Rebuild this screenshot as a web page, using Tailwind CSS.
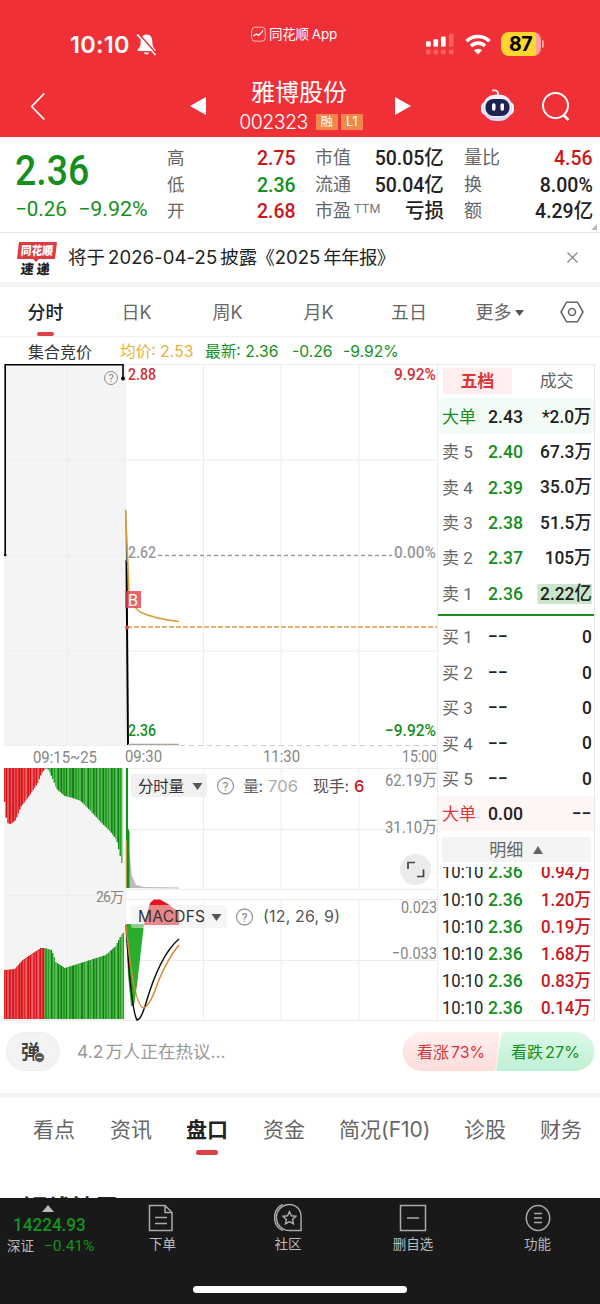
<!DOCTYPE html>
<html lang="zh-CN">
<head>
<meta charset="utf-8">
<title>雅博股份 002323</title>
<script src="https://cdn.jsdelivr.net/npm/@tailwindcss/browser@4"></script>
</head>
<body class="w-[600px] h-[1304px] overflow-hidden bg-white font-['Inter','Noto_Sans_CJK_SC',sans-serif] text-[#222]">
<div class="flex flex-col w-[600px] h-[1304px]">

<!-- status bar and title -->
<header class="h-[137px] shrink-0 bg-[#f03037] text-white flex flex-col">
  <div class="h-[70px] grid grid-cols-[238px_112px_1fr] shrink-0">
    <div class="flex items-center pl-[70px] pt-[19px]">
      <span class="text-[23.500px] font-semibold leading-none tracking-[0.3px]">10:10</span>
      <svg class="ml-[6px]" width="21" height="24" viewBox="0 0 21 24"><path d="M10.5 1.5c-4 0-5.8 3-5.8 6.500c0 5-1 6.300-3 8.500v1.500h17.600v-1.500c-2-2.200-3-3.500-3-8.500c0-3.500-1.800-6.500-5.800-6.500zM7.800 19.500a2.800 2.800 0 0 0 5.400 0z" fill="#fff"/><path d="M3 1l17.500 20" stroke="#f03037" stroke-width="1.600"/><path d="M1.200 1.500L19.500 22" stroke="#fff" stroke-width="1.700"/></svg>
    </div>
    <div class="flex items-start justify-center pt-[26px] gap-[3px]">
      <svg width="15" height="17" viewBox="0 0 15 17" fill="none"><rect x=".7" y="1.200" width="13.600" height="14" rx="3.500" stroke="#ffb9b5"/><path d="M2.500 10l3-2 2 1.500 4-4M11 4.500l1 1" stroke="#fff" stroke-width="1.300"/></svg>
      <span class="text-[13.500px] leading-[17px] whitespace-nowrap tracking-[-0.2px]">同花顺<span class="ml-[3px]">App</span></span>
    </div>
    <div class="flex items-center justify-end pt-[17px] pr-[56px] gap-[10px]">
      <svg width="29" height="22" viewBox="0 0 31 22" fill="#fff"><rect x="0" y="8" width="5" height="6" rx="1"/><rect x="8" y="6" width="5" height="8" rx="1"/><rect x="16" y="3" width="5" height="11" rx="1"/><g fill="#ff6265"><rect x="24.500" y="0" width="5" height="14" rx="1"/><rect x="0" y="17" width="5" height="5" rx="1.500"/><rect x="8" y="17" width="5" height="5" rx="1.500"/><rect x="16" y="17" width="5" height="5" rx="1.500"/><rect x="24.500" y="17" width="5" height="5" rx="1.500"/></g></svg>
      <svg width="26" height="22" viewBox="0 0 26 22" fill="none" stroke="#fff" stroke-width="3.600"><path d="M1.500 8.200a16.500 16.500 0 0 1 23 0"/><path d="M6 13a10 10 0 0 1 14 0"/><path d="M13 21.500l-4-4.200a5.800 5.800 0 0 1 8 0z" fill="#fff" stroke="none"/></svg>
      <div class="flex items-center">
        <div class="w-[40px] h-[24px] rounded-[8px] bg-linear-to-r from-[#ffd62e] from-88% to-[#ffa39c] to-88% text-black font-bold text-[19.500px] leading-[24px] pl-[8px] tracking-[-0.5px]">87</div>
        <div class="w-[2px] h-[8px] ml-[1px] rounded-r bg-[#ff9c9c]"></div>
      </div>
    </div>
  </div>
  <div class="h-[67px] grid grid-cols-[190px_218px_72px_120px] shrink-0">
    <div class="pl-[29px] pt-[22px]"><svg width="18" height="29" viewBox="0 0 18 32"><path d="M16 1.500L2 16l14 14.500" fill="none" stroke="#fff" stroke-width="1.800"/></svg></div>
    <div class="flex flex-col items-center">
      <div class="flex items-start justify-center w-full h-[40px]">
        <svg class="mt-[27px] shrink-0" width="16" height="18" viewBox="0 0 16 17" preserveAspectRatio="none"><path d="M0 8.500L16 0v17z" fill="#fff"/></svg>
        <div class="w-[188px] text-center text-[24px] leading-[26px] pt-[10px]">雅博股份</div>
        <svg class="mt-[27px] shrink-0 ml-[3px] -mr-[3px]" width="16" height="18" viewBox="0 0 16 17" preserveAspectRatio="none"><path d="M16 8.500L0 0v17z" fill="#fff"/></svg>
      </div>
      <div class="flex items-center h-[24px] gap-[3px] pl-[4px]">
        <span class="text-[19.500px] leading-[24px] font-light tracking-[-0.5px] mr-[5px]">002323</span>
        <span class="w-[22px] h-[16px] bg-[#f0874b] text-[12.500px] leading-[16px] text-center">融</span>
        <span class="w-[22px] h-[16px] bg-[#f0874b] text-[12.500px] leading-[16px] text-center">L1</span>
      </div>
    </div>
    <div></div>
    <div class="flex gap-[26px] pt-[20px]">
      <svg width="35" height="34" viewBox="0 0 35 36" preserveAspectRatio="none" class="mt-[-1px]"><path d="M12 1.500h4l2 2v4" fill="none" stroke="#ffe2e6" stroke-width="2"/><rect x="1" y="13" width="33" height="15" rx="6" fill="#fff"/><rect x="3" y="6" width="29" height="28" rx="13" fill="#dcd6fb"/><rect x="4" y="6" width="27" height="24" rx="11" fill="#f3effc"/><rect x="5.500" y="10.500" width="24" height="18" rx="8" fill="#1e2452"/><rect x="12" y="15" width="3.500" height="8" rx="1.700" fill="#fff"/><rect x="20.500" y="15" width="3.500" height="8" rx="1.700" fill="#fff"/></svg>
      <svg class="mt-[1px]" width="30" height="32" viewBox="0 0 30 32" fill="none" stroke="#fff" stroke-width="2"><circle cx="14.500" cy="14.500" r="12.500"/><path d="M22.500 24l5 5" stroke-width="2.500"/></svg>
    </div>
  </div>
</header>

<!-- quote summary -->
<section class="h-[96px] shrink-0 border-b border-[#e8e8e8] grid grid-cols-[167px_129px_148px_149px] font-['Roboto','Noto_Sans_CJK_SC',sans-serif]">
  <div class="pl-[15px] pt-[10px] text-[#158f1c]">
    <div class="text-[43px] leading-[46px] font-medium scale-x-[.87] origin-left whitespace-nowrap">2.36</div>
    <div class="flex text-[21px] leading-[26px] mt-[3px] whitespace-nowrap"><span class="w-[63px]"><span class="inline-block scale-x-[.98] origin-left">−0.26</span></span><span class="inline-block scale-x-[1.02] origin-left">−9.92%</span></div>
  </div>
  <div class="pt-[8px] text-[17.500px] leading-[26.500px] text-[#666]" id="q1"></div>
  <div class="pt-[8px] pl-[19px] text-[18px] leading-[26.500px] text-[#666]" id="q2"></div>
  <div class="pt-[8px] pl-[20px] text-[18px] leading-[26.500px] text-[#666] relative" id="q3"></div>
</section>

<!-- announcement -->
<section class="h-[54px] shrink-0 flex items-center border-b-5 border-[#f4f4f4]">
  <svg class="ml-[16px]" width="42" height="37" viewBox="0 0 42 37" font-family="'Noto Sans CJK SC',sans-serif" font-weight="900"><path d="M3 3l38 0-2 17-16 0-3 3-3-3-16 0z" fill="#dc3c40"/><text x="6" y="16.500" font-size="12" fill="#fff" textLength="32" lengthAdjust="spacingAndGlyphs" transform="skewX(-5)">同花顺</text><text x="8" y="35" font-size="13.500" fill="#222" textLength="29" lengthAdjust="spacingAndGlyphs" transform="skewX(-6)">速 递</text></svg>
  <div class="ml-[10px] w-[509px] -mt-[2px] text-[18.500px] leading-[30px] flex whitespace-nowrap">将于<span class="mx-[3px] tracking-[0.1px]">2026-04-25</span>披露<span class="-ml-[1px]">《</span><span>2025</span><span class="ml-[3px] tracking-[-0.7px]">年年报》</span></div>
  <svg class="-ml-[11px]" width="13" height="13" viewBox="0 0 13 13"><path d="M1.500 1.500l10 10m0-10l-10 10" stroke="#888" stroke-width="1.300"/></svg>
</section>

<!-- period tabs -->
<nav class="h-[50px] shrink-0 border-b border-[#f0f0f0] grid grid-cols-[91px_91px_91px_91px_90px_91px_55px] text-[18px] text-[#666] text-center leading-[52px]">
  <div class="flex flex-col items-center font-medium text-[#222]"><span class="h-[45px]">分时</span><span class="w-[17px] h-[4px] rounded-full bg-[#dc3f45]"></span></div>
  <div>日K</div><div>周K</div><div>月K</div><div>五日</div>
  <div class="flex items-center justify-center gap-[3px]">更多<svg width="9" height="6" viewBox="0 0 9 6"><path d="M0 0h9L4.500 6z" fill="#555"/></svg></div>
  <div class="flex items-center justify-center"><svg class="-mt-[3px] -ml-[2px]" width="24" height="22" viewBox="0 0 24 22" fill="none" stroke="#666" stroke-width="1.600"><path d="M6.500 1.200h11L23 11l-5.500 9.800h-11L1 11z"/><circle cx="12" cy="11" r="3.500"/></svg></div>
</nav>

<div class="h-[27px] shrink-0 flex items-center text-[15.700px] whitespace-nowrap text-[#158f1c] pt-[2px]">
  <span class="w-[120px] pl-[28px] text-[16px] text-[#333]">集合竞价</span>
  <span class="w-[85px] text-[#e6b13a]">均价: 2.53</span>
  <span class="w-[87px]">最新: 2.36</span>
  <span class="w-[51px]">-0.26</span><span>-9.92%</span>
</div>

<!-- charts and order book -->
<main class="h-[658px] shrink-0 flex">
  <svg id="chart" width="438" height="658" viewBox="0 364 438 658" class="shrink-0" font-family="Roboto,'Noto Sans CJK SC',sans-serif" font-size="17" fill="none">
    <path d="M4 364h121.500v382H4zM4 768h121.500v253H4z" fill="#f4f4f4"/>
    <g stroke="#ededed"><path d="M4 364.500H438M4 460H438M4 555.500H125M4 651H438M4 745.500H125M125.500 364v382M203.500 364v382M281 364v382M359 364v382M437.500 364v657M67 364v382M67 768v253"/><path d="M125 768.500H438M125 829.500H438M125 889.500H438M125 899.500H438M125 960.500H438M4 1020.500H438M4 895.500h121M203.500 768v121M281 768v121M359 768v121M203.500 899v122M281 899v122M359 899v122M125.500 768v253"/></g>
    <g id="bars"></g>
    <path d="M158 555.500H392" stroke="#9a9a9a" stroke-width="1.300" stroke-dasharray="4 3"/>
    <path d="M127 627H437" stroke="#e09b46" stroke-width="1.500" stroke-dasharray="5 2"/>
    <path d="M180 745.500H437" stroke="#ccc" stroke-dasharray="5 4"/>
    <path d="M5.200 555V364.800H123v14" stroke="#000" stroke-width="1.600"/><circle cx="123" cy="378.500" r="2" fill="#000"/><circle cx="5.200" cy="555" r="1.300" fill="#000"/>
    <g stroke="#8b8b8b"><circle cx="111" cy="378" r="6.500"/></g><text x="111" y="382" font-size="11" text-anchor="middle" fill="#888">?</text>
    <path d="M126.500 560L128 745" stroke="#000" stroke-width="2"/><path d="M125.800 510L126.500 562" stroke="#555" stroke-width="1"/>
    <path d="M128 744.500H179" stroke="#aaa59c" stroke-width="1.500"/>
    <path d="M125.500 510Q128 560 129 593Q132 606 140 612Q155 619 179 621.500" stroke="#d9a13c" stroke-width="1.500"/>
    <rect x="125" y="591" width="16" height="17" fill="#e0474c" fill-opacity=".82"/><text x="128" y="606" font-size="16" fill="#fff" textLength="10" lengthAdjust="spacingAndGlyphs">B</text><circle cx="127" cy="627.500" r="2" fill="#e0474c"/>
    <g font-weight="500">
      <text x="128" y="380" fill="#d42f33" textLength="28" lengthAdjust="spacingAndGlyphs">2.88</text>
      <text x="394" y="380" fill="#d42f33" textLength="42" lengthAdjust="spacingAndGlyphs">9.92%</text>
      <text x="128" y="558" fill="#999" textLength="28" lengthAdjust="spacingAndGlyphs">2.62</text>
      <text x="394" y="558" fill="#999" textLength="42" lengthAdjust="spacingAndGlyphs">0.00%</text>
      <text x="128" y="736" fill="#158f1c" textLength="28" lengthAdjust="spacingAndGlyphs">2.36</text>
      <text x="385" y="736" fill="#158f1c" textLength="51" lengthAdjust="spacingAndGlyphs">−9.92%</text>
    </g>
    <g fill="#858585">
      <text x="33" y="763" textLength="64" lengthAdjust="spacingAndGlyphs">09:15~25</text>
      <text x="125" y="762" textLength="37" lengthAdjust="spacingAndGlyphs">09:30</text>
      <text x="263" y="762" textLength="37" lengthAdjust="spacingAndGlyphs">11:30</text>
      <text x="402" y="762" textLength="35" lengthAdjust="spacingAndGlyphs">15:00</text>
      <text x="385" y="786" textLength="52" lengthAdjust="spacingAndGlyphs">62.19万</text>
      <text x="385" y="833" textLength="52" lengthAdjust="spacingAndGlyphs">31.10万</text>
      <text x="401" y="913" textLength="36" lengthAdjust="spacingAndGlyphs">0.023</text>
      <text x="392" y="959" textLength="45" lengthAdjust="spacingAndGlyphs">−0.033</text>
      <text x="96" y="902" font-size="14" textLength="28">26万</text>
    </g>
    <!-- minute volume -->
    <path d="M129 888V850L130.500 862L132 876L136 885L144 887L179 887.500V888.500z" fill="#bbb"/>
    <path d="M126 768h2v60l1.500 4v56h-3.500z" fill="#158f1c"/><path d="M126.300 840v48" stroke="#d9a13c"/>
    <!-- macd -->
    <path d="M144 925L150 903L154 899.500H160L168 904L173 908L179 912V925z" fill="#e2161c"/>
    <path d="M126 924H144L137 985L134 1006H131L128 975z" fill="#2aad2a"/>
    <rect x="131" y="774" width="76" height="23" rx="2" fill="#eee" fill-opacity=".8"/>
    <rect x="131" y="905" width="96" height="23" rx="2" fill="#eee" fill-opacity=".52"/>
    <path d="M126 925Q131 1010 137 1020Q141 1020 146 1003Q160 955 179 939" stroke="#111" stroke-width="1.500"/>
    <path d="M126 925Q134 1008 144 1008Q151 1004 158 982Q168 958 179 945" stroke="#d48a35" stroke-width="1.500"/>
    <text x="138" y="792" font-size="15.500" fill="#333" textLength="46">分时量</text><path d="M192.500 783h10l-5 7z" fill="#555"/>
    <circle cx="225.500" cy="786" r="8" stroke="#999" stroke-width="1.300"/><text x="225.500" y="790.500" font-size="12.500" text-anchor="middle" fill="#888">?</text>
    <g font-family="Inter,'Noto Sans CJK SC',sans-serif">
      <text x="243" y="791.500" font-size="16" fill="#666" textLength="20">量:</text>
      <text x="268" y="791.500" font-size="16.500" fill="#aaa" textLength="30">706</text>
      <text x="313" y="791.500" font-size="16" fill="#555" textLength="36">现手:</text>
      <text x="354" y="791.500" font-size="16.500" fill="#c4161c" font-weight="500">6</text>
      <text x="138" y="922" font-size="15.500" fill="#333" textLength="67">MACDFS</text>
      <text x="263" y="922" font-size="16" fill="#555" textLength="77">(12, 26, 9)</text>
    </g>
    <path d="M211.500 914h10l-5 7z" fill="#555"/>
    <circle cx="244.500" cy="917" r="8" stroke="#999" stroke-width="1.300"/><text x="244.500" y="921.500" font-size="12.500" text-anchor="middle" fill="#888">?</text>
    <circle cx="415.500" cy="869.500" r="15.500" fill="#ebebeb"/><path d="M408 869v-6.500h7M417 876.500h6.500v-7" stroke="#444" stroke-width="1.700"/>
  </svg>

  <aside class="w-[156.500px] h-[657px] border-r border-b border-t border-[#e8e8e8] flex flex-col font-['Roboto','Noto_Sans_CJK_SC',sans-serif]">
    <div class="h-[33.400px] shrink-0 flex text-[17px] leading-[27px] pt-[3px] text-center">
      <div class="w-[69px] ml-[5px] h-[26px] bg-[#feeeee] text-[#d9363b] font-bold">五档</div><div class="w-[82px] pl-[8px] text-[#666]">成交</div>
    </div>
    <div id="sell"></div>
    <div class="h-[2.500px] shrink-0 mt-[3px] mb-[2.800px] bg-[#1c8c22]"></div>
    <div id="buy"></div>
    <div class="h-[25px] shrink-0 mt-[6px] ml-[4px] mr-[3px] bg-[#f4f4f4] flex items-center justify-center text-[17px] text-[#666] gap-[10px] pt-px">明细<svg width="10" height="8" viewBox="0 0 10 8"><path d="M0 8h10L5 0z" fill="#666"/></svg></div>
    <div class="mt-[5px] flex-1 overflow-hidden"><div class="-mt-[8px]" id="ticks"></div></div>
  </aside>
</main>

<!-- discussion bar -->
<section class="h-[76px] shrink-0 flex items-start pt-[10px] border-b-5 border-[#f4f4f4]">
  <div class="ml-[6px] w-[54px] h-[39px] rounded-full bg-[#f3f3f3] border border-[#eee] flex items-center justify-center">
    <svg width="26" height="26" viewBox="0 0 26 26"><text x="1" y="20" font-family="'Noto Sans CJK SC',sans-serif" font-size="19" font-weight="700" fill="#444">弹</text><circle cx="19.500" cy="18.500" r="5" fill="#555" stroke="#f3f3f3"/><path d="M17 18.500h5" stroke="#fff" stroke-width="1.200"/></svg>
  </div>
  <div class="ml-[17px] w-[325px] text-[17.500px] leading-[39px] text-[#999]">4.2<span class="ml-[2px]">万人正在热议...</span></div>
  <svg width="193" height="41" viewBox="0 0 193 41" font-family="Inter,'Noto Sans CJK SC',sans-serif" font-size="16">
    <defs><linearGradient id="r" x2="0" y2="1"><stop stop-color="#fff0ef"/><stop offset="1" stop-color="#fddcda"/></linearGradient><linearGradient id="g" x2="0" y2="1"><stop stop-color="#dcf9e8"/><stop offset="1" stop-color="#bff0d3"/></linearGradient></defs>
    <path d="M20 0H95q3 0 2.600 3L94 36q-.5 3-3.500 3H20a19.500 19.500 0 0 1 0-39z" fill="url(#r)"/>
    <path d="M103 0H173a19.500 19.500 0 0 1 0 39H97q-3 0-2.600-3L99 3q.5-3 4-3z" fill="url(#g)"/>
    <text x="15" y="25.500" fill="#d3363a" textLength="32">看涨</text><text x="49" y="25.500" fill="#d3363a" textLength="34" lengthAdjust="spacingAndGlyphs">73%</text>
    <text x="109" y="25.500" fill="#158f1c" textLength="32">看跌</text><text x="143" y="25.500" fill="#158f1c" textLength="35" lengthAdjust="spacingAndGlyphs">27%</text>
  </svg>
</section>

<!-- section tabs -->
<nav class="h-[62px] shrink-0 flex text-[21px] leading-[63px] text-[#666] whitespace-nowrap pl-[33px]">
  <span class="w-[77px]">看点</span><span class="w-[76px]">资讯</span>
  <span class="w-[77px] text-[#222] font-bold flex flex-col"><span class="h-[52px]">盘口</span><span class="w-[22px] h-[5px] ml-[10px] rounded-full bg-[#dc3f45] shrink-0"></span></span>
  <span class="w-[76px]">资金</span><span class="w-[125px]">简况(F10)</span><span class="w-[76px]">诊股</span><span>财务</span>
</nav>
<div class="h-[38px] shrink-0 overflow-hidden pl-[23px] pt-[33.500px] text-[24px] leading-[30px] font-bold">短线精灵</div>

<!-- bottom bar -->
<footer class="h-[106px] shrink-0 bg-[#191919] text-[#bbb] flex flex-col items-center">
  <div class="h-[88px] w-full grid grid-cols-[100px_125px_126px_124px_125px] text-[13.500px] leading-[18px] text-center">
    <div class="font-['Roboto','Noto_Sans_CJK_SC',sans-serif] flex flex-col text-left">
      <svg class="ml-[42px] mt-[7px]" width="12" height="7" viewBox="0 0 12 7"><path d="M0 7h12L6 0z" fill="#bbb"/></svg>
      <span class="pl-[13px] pt-[2px] text-[19px] leading-[21px] text-[#15941c] font-medium"><span class="inline-block scale-x-[.9] origin-left">14224.93</span></span>
      <span class="pl-[7px] flex gap-[10px] mt-[2px]"><span>深证</span><span class="text-[15.500px] text-[#15941c]">−0.41%</span></span>
    </div>
    <div class="flex flex-col items-center gap-[2px] pt-[5px]"><svg class="-ml-[3px]" width="26" height="30" viewBox="0 0 26 30" fill="none" stroke="#aaa" stroke-width="1.500"><path d="M1.500 2.500h15.500l7 7v18H1.500zM17 2.500v7h7M7 14.500h12M7 20.500h12"/></svg>下单</div>
    <div class="flex flex-col items-center gap-[2px] pt-[5px]"><svg width="28" height="29" viewBox="0 0 29 30" fill="none" stroke="#aaa" stroke-width="1.500" class="mb-[1px]"><path d="M16 1.500a12 12 0 0 1 12 12v15H16a13.500 13.500 0 0 1 0-27zM9 1.500a15 15 0 0 0 0 27"/><path d="M16 9l2 4.200 4.600.6-3.400 3.200.9 4.600-4.100-2.300-4.100 2.300.9-4.600-3.400-3.200 4.600-.6z"/></svg>社区</div>
    <div class="flex flex-col items-center gap-[2px] pt-[5px]"><svg width="28" height="30" viewBox="0 0 28 30" fill="none" stroke="#aaa" stroke-width="1.500"><path d="M1.500 2.500h25v25h-25zM8 15h12"/></svg>删自选</div>
    <div class="flex flex-col items-center gap-[2px] pt-[5px]"><svg width="26" height="30" viewBox="0 0 26 30" fill="none" stroke="#aaa" stroke-width="1.500"><ellipse cx="13" cy="15" rx="11.700" ry="12.500"/><path d="M9 10.500h8M9 15h8M9 19.500h8"/></svg>功能</div>
  </div>
  <div class="w-[214px] h-[7px] rounded-full bg-white"></div>
</footer>
</div>

<script>
const el = id => document.getElementById(id);
const R = 'text-[#cb151b]', G = 'text-[#158f1c]', K = 'text-[#222]';
const stat = (rows) => rows.map(([l, v, c, s]) => `<div class="flex justify-between whitespace-nowrap h-[26.500px]"><span>${l}${s ? `<span class="inline-block text-[12.500px] tracking-[0.3px] text-[#777] ml-[3px] -translate-y-[4px]">${s}</span>` : ''}</span><span class="${c} text-[20.500px] font-medium inline-block scale-x-[.95] origin-right">${v}</span></div>`).join('');
el('q1').innerHTML = stat([['高','2.75',R],['低','2.36',G],['开','2.68',R]]);
el('q2').innerHTML = stat([['市值','50.05亿',K],['流通','50.04亿',K],['市盈','亏损',K,'TTM']]);
el('q3').innerHTML = stat([['量比','4.56',R],['换','8.00%',K],['额','4.29亿',K]]) + '<svg class="absolute right-[-4px] bottom-[2px]" width="6" height="6" viewBox="0 0 6 6"><path d="M6 0v6H0z" fill="#bbb"/></svg>';

const row = ([l, p, q, lc, pc, bg, hl]) => `<div class="h-[35.400px] grid grid-cols-[46px_38px_1fr] items-center pl-[4px] pr-[2px] pt-[3px] whitespace-nowrap ${bg}"><span class="text-[17px] ${lc}">${l}</span><span class="-mt-px text-[19px] font-medium inline-block scale-x-[.93] origin-left ${pc}">${p}</span><span class="text-right"><span class="inline-block text-[19px] leading-[20px] scale-x-[.91] origin-right font-medium ${hl}">${q}</span></span></div>`;
const L = 'text-[#666]';
el('sell').innerHTML = [['大单','2.43','*2.0万',G,K,'bg-[#f3fbf6]',''],['卖 5','2.40','67.3万',L,G,'',''],['卖 4','2.39','35.0万',L,G,'',''],['卖 3','2.38','51.5万',L,G,'',''],['卖 2','2.37','105万',L,G,'',''],['卖 1','2.36','2.22亿',L,G,'','bg-[#c9e6cb] pl-[3px]']].map(row).join('');
el('buy').innerHTML = [1,2,3,4,5].map(i => ['买 ' + i,'−−','0',L,K,'','']).concat([['大单','0.00','−−','text-[#d9363b]',K,'bg-[#fef5f5]','']]).map(row).join('');
el('ticks').innerHTML = ['0.94','1.20','0.19','1.68','0.83','0.14'].map(v => `<div class="h-[27.200px] grid grid-cols-[46px_38px_1fr] items-center pl-[4px] pr-[2px] text-[18.500px] whitespace-nowrap"><span><span class="inline-block scale-x-[.9] origin-left">10:10</span></span><span class="inline-block scale-x-[.95] origin-left font-medium ${G}">2.36</span><span class="text-right ${R}"><span class="inline-block scale-x-[.91] origin-right font-medium">${v}万</span></span></div>`).join('');

// auction volume: unmatched on top, matched at the bottom
const top_ = [[4,802],[6,823],[10,824],[15,820],[20,807],[27,798],[33,789],[37,783],[41,773],[45,768],[48,770],[52,779],[56,789],[64,796],[72,798],[80,801],[90,811],[100,822],[110,832],[116,840],[121,863],[122,768]];
const bot = [[4,970],[14,969],[22,960],[28,956],[40,948],[44,948],[51,950],[55,962],[64,968],[80,963],[105,955],[115,946],[120,936],[124,931]];
const at = (p, x) => { for (let i = 1; i < p.length; i++) if (x <= p[i][0]) { const [a, b] = p[i-1], [c, d] = p[i]; return b + (d - b) * (x - a) / (c - a); } return p[p.length-1][1]; };
let s = '';
for (let i = 0, x = 4; x < 123.500; i++, x += 1.500) {
  const red = x < 44, dark = i % 5 === 1 || i % 7 === 3, pale = i % 4 === 2;
  const f = red ? (dark ? '#d0141a' : pale ? '#ef4c50' : '#e3262b') : (dark ? '#128212' : pale ? '#4dbb4d' : '#25a025');
  const y1 = at(top_, x), y2 = at(bot, x);
  if (x < 121.800) s += `<rect x="${x}" y="768" width="1.5" height="${y1 - 768}" fill="${f}"/>`;
  s += `<rect x="${x}" y="${y2}" width="1.5" height="${1019 - y2}" fill="${f}"/>`;
}
el('bars').innerHTML = s;
</script>
</body>
</html>
